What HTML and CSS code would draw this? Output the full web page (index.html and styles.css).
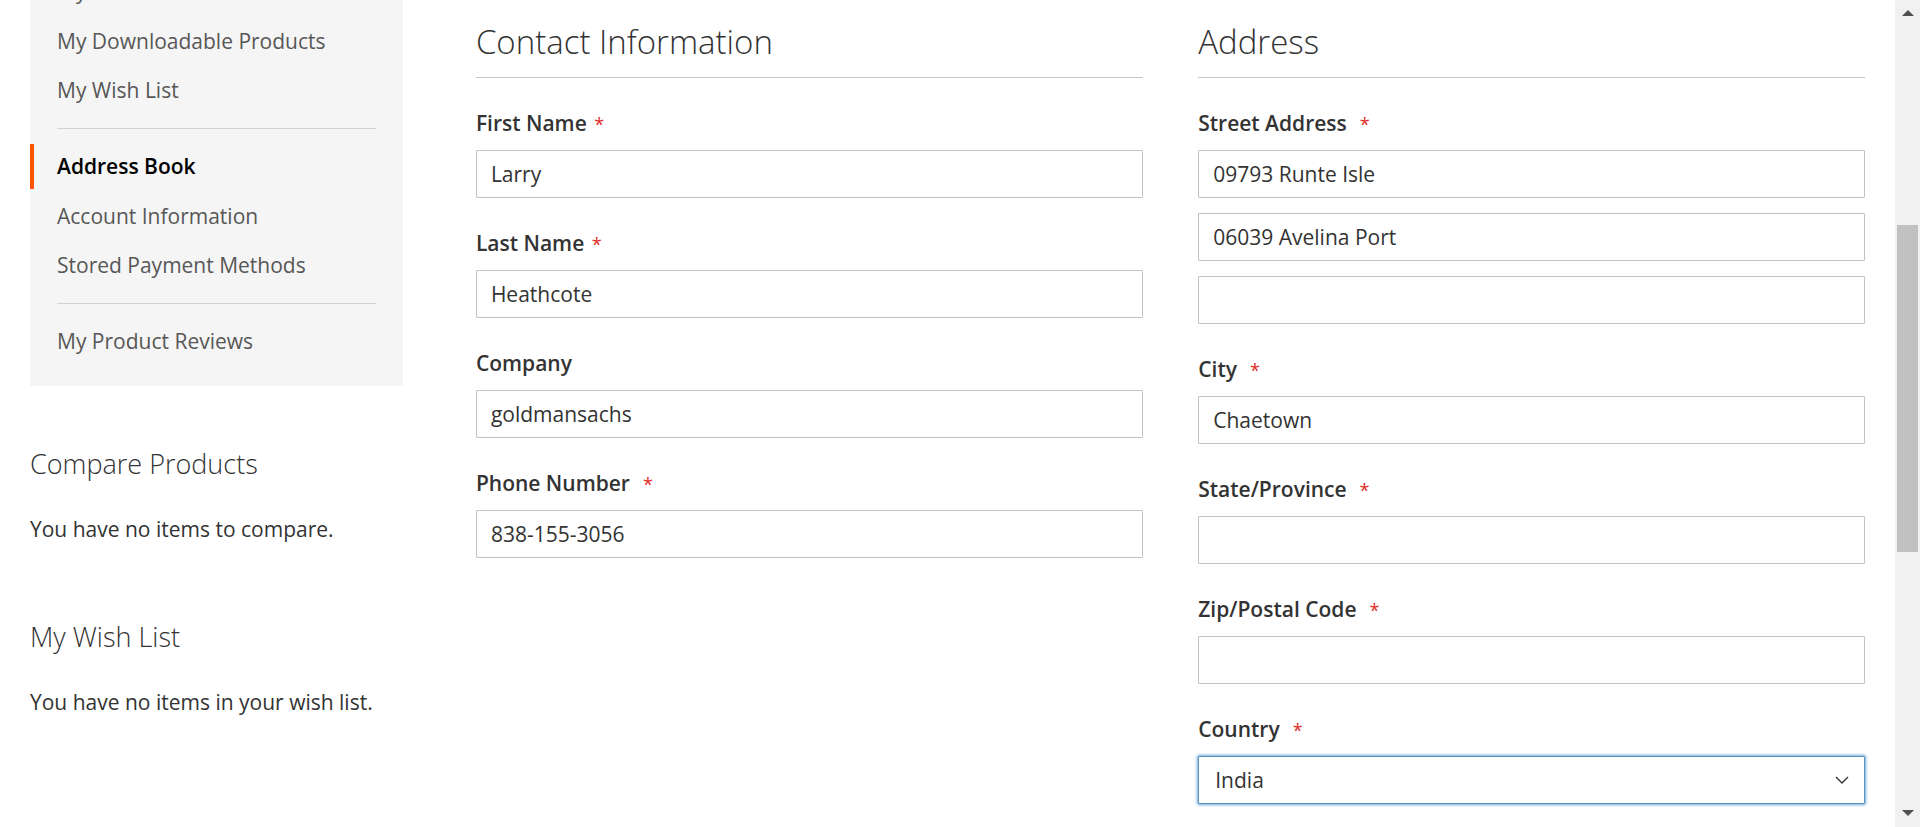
FILE: index.html
```html
<!DOCTYPE html>
<html lang="en">
<head>
<meta charset="utf-8">
<title>Address Book</title>
<link rel="stylesheet" href="styles.css">
</head>
<body>
<div class="page">
  <div class="columns">
    <aside class="sidebar">
      <nav class="account-nav">
        <ul class="nav-list">
          <li class="item"><a href="#">My Orders</a></li>
          <li class="item"><a href="#">My Downloadable Products</a></li>
          <li class="item"><a href="#">My Wish List</a></li>
          <li class="delim"></li>
          <li class="item current"><strong>Address Book</strong></li>
          <li class="item"><a href="#">Account Information</a></li>
          <li class="item"><a href="#">Stored Payment Methods</a></li>
          <li class="delim"></li>
          <li class="item"><a href="#">My Product Reviews</a></li>
        </ul>
      </nav>
      <div class="block block-compare">
        <div class="block-title">Compare Products</div>
        <p class="empty">You have no items to compare.</p>
      </div>
      <div class="block block-wishlist">
        <div class="block-title">My Wish List</div>
        <p class="empty">You have no items in your wish list.</p>
      </div>
    </aside>
    <main class="main">
      <form class="address-form">
        <fieldset class="fieldset">
          <legend class="legend">Contact Information</legend>
          <div class="field">
            <label class="label req">First Name</label>
            <input class="input" type="text" value="Larry">
          </div>
          <div class="field">
            <label class="label req">Last Name</label>
            <input class="input" type="text" value="Heathcote">
          </div>
          <div class="field">
            <label class="label">Company</label>
            <input class="input" type="text" value="goldmansachs">
          </div>
          <div class="field">
            <label class="label req spaced">Phone Number</label>
            <input class="input" type="text" value="838-155-3056">
          </div>
        </fieldset>
        <fieldset class="fieldset">
          <legend class="legend">Address</legend>
          <div class="field street">
            <label class="label req spaced">Street Address</label>
            <input class="input" type="text" value="09793 Runte Isle">
            <input class="input" type="text" value="06039 Avelina Port">
            <input class="input" type="text" value="">
          </div>
          <div class="field">
            <label class="label req spaced">City</label>
            <input class="input" type="text" value="Chaetown">
          </div>
          <div class="field">
            <label class="label req spaced">State/Province</label>
            <input class="input" type="text" value="">
          </div>
          <div class="field">
            <label class="label req spaced">Zip/Postal Code</label>
            <input class="input" type="text" value="">
          </div>
          <div class="field">
            <label class="label req spaced">Country</label>
            <div class="select-wrap">
              <select class="select focused">
                <option>India</option>
              </select>
              <svg class="chevron" width="14" height="8" viewBox="0 0 14 8"><path d="M1 1 L7 7 L13 1" fill="none" stroke="#333" stroke-width="1.4"/></svg>
            </div>
          </div>
        </fieldset>
      </form>
    </main>
  </div>
</div>
<div class="scrollbar">
  <span class="sb-arrow sb-up"></span>
  <span class="sb-thumb"></span>
  <span class="sb-arrow sb-down"></span>
</div>
</body>
</html>
```

FILE: styles.css
```css
* { box-sizing: border-box; }

html, body {
  margin: 0;
  padding: 0;
  height: 827px;
  overflow: hidden;
}

body {
  display: flex;
  background: #fff;
  font-family: "Open Sans", "Liberation Sans", sans-serif;
  font-size: 21px;
  line-height: 30px;
  color: #333;
}

.page {
  flex: 1;
  min-width: 0;
  padding: 0 30px;
}

.columns {
  display: flex;
  align-items: flex-start;
}

/* Sidebar */
.sidebar {
  width: 22.3%;
  padding-right: 2%;
  flex-shrink: 0;
}

.account-nav {
  background: #f5f5f5;
  padding: 22.5px 0;
  margin-top: -54px;
}

.nav-list {
  list-style: none;
  margin: 0;
  padding: 0;
  display: flex;
  flex-direction: column;
}

.item {
  height: 45px;
}

.item + .item {
  margin-top: 4.5px;
}

.item a,
.item strong {
  display: block;
  padding: 7.5px 18px 7.5px 23px;
  border-left: 4px solid transparent;
  line-height: 30px;
  color: #575757;
  text-decoration: none;
}

.item.current strong {
  border-left-color: #ff5501;
  color: #000;
  font-weight: 600;
}

.delim {
  border-top: 1px solid #d1d1d1;
  margin: 15px 27px 15px;
}

.block-title {
  font-size: 27px;
  font-weight: 300;
  line-height: 36px;
  color: #333;
}

.empty {
  margin: 0;
  line-height: 30px;
}

.block-compare {
  margin-top: 60px;
}

.block-compare .empty {
  margin-top: 32px;
}

.block-wishlist {
  margin-top: 75px;
}

.block-wishlist .empty {
  margin-top: 31.5px;
}

/* Main */
.main {
  width: 77.7%;
  padding-left: 2%;
  padding-top: 22px;
}

.address-form {
  display: flex;
  justify-content: space-between;
}

.fieldset {
  width: 48%;
  margin: 0;
  padding: 0;
  border: 0;
  min-width: 0;
}

.legend {
  display: block;
  width: 100%;
  padding: 0 0 15px;
  margin: 0 0 30px;
  border-bottom: 1px solid #c6c6c6;
  font-size: 33px;
  font-weight: 300;
  line-height: 39.6px;
  color: #333;
  float: left;
}

.legend + .field {
  clear: both;
}

.field {
  margin-bottom: 30px;
}

.label {
  display: block;
  font-weight: 600;
  line-height: 30px;
  margin-bottom: 12px;
  color: #333;
}

.label.req::after {
  content: "*";
  color: #e02b27;
  font-size: 18px;
  font-weight: 400;
  line-height: 1;
  margin-left: 7.5px;
}

.label.spaced::after {
  margin-left: 13px;
}

.input,
.select {
  display: block;
  width: 100%;
  height: 48px;
  border: 1px solid #c2c2c2;
  border-radius: 1px;
  background: #fff;
  padding: 0 14px;
  font-family: "Open Sans", "Liberation Sans", sans-serif;
  font-size: 21px;
  color: #333;
  outline: none;
}

.street .input + .input {
  margin-top: 15px;
}

.select-wrap {
  position: relative;
}

.select {
  -webkit-appearance: none;
  appearance: none;
  padding: 0 40px 0 16px;
}

.select.focused {
  border-color: #5e93ba;
  box-shadow: 0 0 3px 1px #68a8e0;
}

.chevron {
  position: absolute;
  right: 16px;
  top: 50%;
  transform: translateY(-50%);
  pointer-events: none;
}

/* Scrollbar */
.scrollbar {
  width: 25px;
  flex-shrink: 0;
  height: 827px;
  background: #f1f1f1;
  display: flex;
  flex-direction: column;
  align-items: center;
}

.sb-arrow {
  display: block;
  width: 0;
  height: 0;
  border-left: 6px solid transparent;
  border-right: 6px solid transparent;
}

.sb-up {
  margin-top: 10px;
  border-bottom: 6px solid #505050;
}

.sb-thumb {
  display: block;
  width: 21px;
  height: 327px;
  margin-top: 209px;
  background: #c1c1c1;
}

.sb-down {
  margin-top: auto;
  margin-bottom: 11px;
  border-top: 6px solid #505050;
}
```
